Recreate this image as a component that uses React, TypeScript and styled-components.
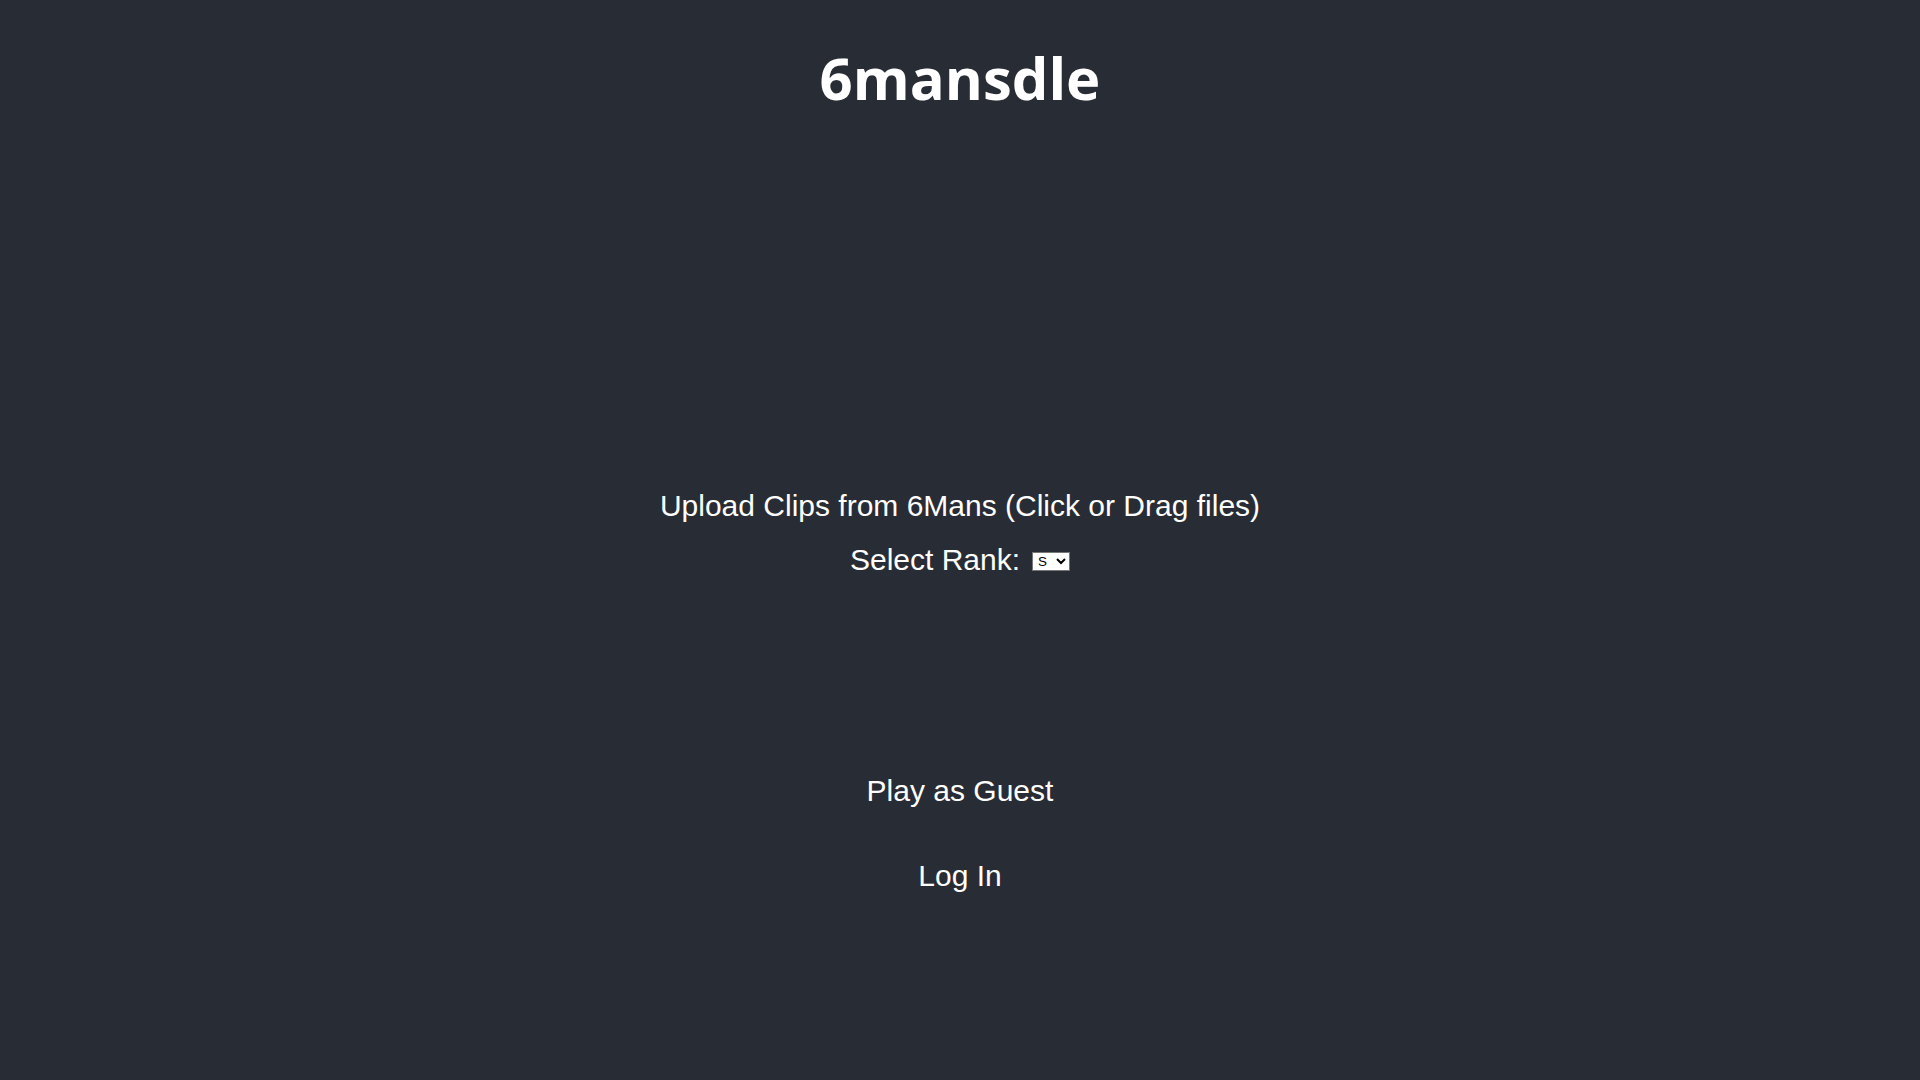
import styled, { createGlobalStyle } from "styled-components";
import { useState } from "react";

const ranks = ['S', 'A', 'B', 'C', 'D', 'E']

const GlobalStyle = createGlobalStyle`
  html, body {
    margin: 0;
    padding: 0;
    background: #282c34;
  }
  body {
    min-height: 100vh;
    font-family: "Liberation Sans", Arial, sans-serif;
    color: #ffffff;
  }
`

const App = () => {
    const [rank, setRank] = useState<string>('S')

    return (
        <>
            <GlobalStyle/>
            <Page>
                <Title>6mansdle</Title>

                <UploadSection>
                    <DropZone>
                        <HiddenInput type="file" multiple/>
                        Upload Clips from 6Mans (Click or Drag files)
                    </DropZone>
                    <RankRow>
                        <RankLabel>Select Rank:</RankLabel>
                        <RankSelect value={rank} onChange={e => setRank(e.target.value)}>
                            {ranks.map(r => <option key={r} value={r}>{r}</option>)}
                        </RankSelect>
                    </RankRow>
                </UploadSection>

                <ActionList>
                    <TextButton>Play as Guest</TextButton>
                    <TextButton>Log In</TextButton>
                </ActionList>
            </Page>
        </>
    )
}

export default App


const Page = styled.div`
  display: flex;
  flex-direction: column;
  align-items: center;
  min-height: 100vh;
`
const Title = styled.h1`
  margin: 38px 0 0;
  font-family: "Open Sans", "Noto Sans", sans-serif;
  font-size: 58px;
  font-weight: 700;
  line-height: normal;
  color: #ffffff;
`
const UploadSection = styled.div`
  display: flex;
  flex-direction: column;
  align-items: center;
  gap: 20px;
  margin-top: 372px;
`
const DropZone = styled.label`
  font-size: 30px;
  line-height: normal;
  cursor: pointer;
`
const HiddenInput = styled.input`
  display: none;
`
const RankRow = styled.div`
  display: flex;
  align-items: center;
  gap: 12px;
`
const RankLabel = styled.span`
  font-size: 30px;
  line-height: normal;
`
const RankSelect = styled.select`
  width: 38px;
  height: 19px;
  margin-top: 2px;
  padding: 0 0 0 1px;
  font-family: "Liberation Sans", Arial, sans-serif;
  font-size: 13.33px;
  color: #000000;
  background: #ffffff;
  border: 1px solid #767676;
  border-radius: 0;
`
const ActionList = styled.div`
  display: flex;
  flex-direction: column;
  align-items: center;
  gap: 51px;
  margin-top: 197px;
`
const TextButton = styled.button`
  padding: 0;
  border: none;
  background: none;
  font-family: "Liberation Sans", Arial, sans-serif;
  font-size: 30px;
  line-height: normal;
  color: #ffffff;
  cursor: pointer;
`
